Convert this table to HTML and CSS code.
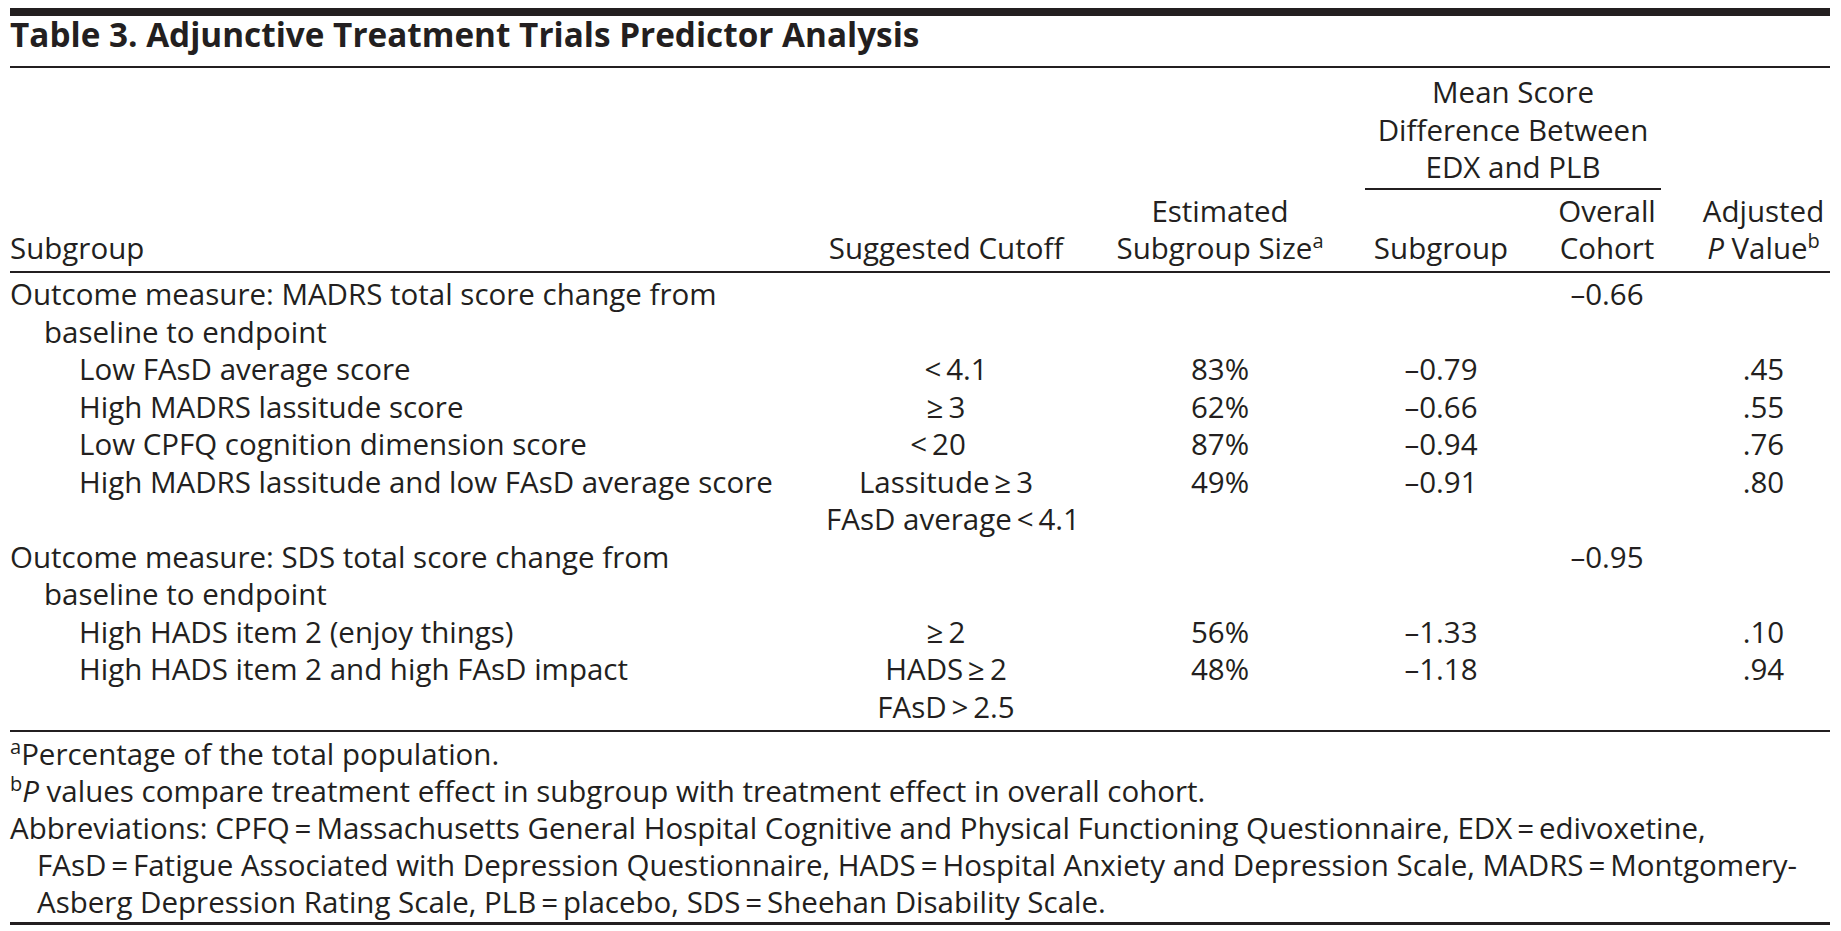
FILE: index.html
```html
<!DOCTYPE html>
<html lang="en">
<head>
<meta charset="utf-8">
<title>Table 3. Adjunctive Treatment Trials Predictor Analysis</title>
<link rel="stylesheet" href="styles.css">
</head>
<body>
<div class="page">
  <div class="topbar"></div>
  <h1 class="title">Table 3. Adjunctive Treatment Trials Predictor Analysis</h1>
  <table class="data">
    <colgroup>
      <col class="c1"><col class="c2"><col class="c3"><col class="c4"><col class="c5"><col class="c6">
    </colgroup>
    <thead>
      <tr class="hrow1">
        <th rowspan="2" class="rs left">Subgroup</th>
        <th rowspan="2" class="rs">Suggested Cutoff</th>
        <th rowspan="2" class="rs est">Estimated<br>Subgroup Size<sup>a</sup></th>
        <th colspan="2" class="spanner"><div class="spanner-in">Mean Score<br>Difference Between<br>EDX and PLB</div></th>
        <th rowspan="2" class="rs">Adjusted<br><i>P</i> Value<sup>b</sup></th>
      </tr>
      <tr class="hrow2">
        <th>Subgroup</th>
        <th>Overall<br>Cohort</th>
      </tr>
    </thead>
    <tbody>
      <tr>
        <td class="sub l0">Outcome measure: MADRS total score change from<br>baseline to endpoint</td>
        <td></td><td class="est"></td><td></td><td>–0.66</td><td></td>
      </tr>
      <tr>
        <td class="sub l1">Low FAsD average score</td>
        <td class="nudge-r">&lt;&#8201;4.1</td><td class="est">83%</td><td>–0.79</td><td></td><td>.45</td>
      </tr>
      <tr>
        <td class="sub l1">High MADRS lassitude score</td>
        <td>≥&#8201;3</td><td class="est">62%</td><td>–0.66</td><td></td><td>.55</td>
      </tr>
      <tr>
        <td class="sub l1">Low CPFQ cognition dimension score</td>
        <td class="nudge-l">&lt;&#8201;20</td><td class="est">87%</td><td>–0.94</td><td></td><td>.76</td>
      </tr>
      <tr>
        <td class="sub l1">High MADRS lassitude and low FAsD average score</td>
        <td>Lassitude&#8201;≥&#8201;3<br>FAsD average&#8201;&lt;&#8201;4.1</td><td class="est">49%</td><td>–0.91</td><td></td><td>.80</td>
      </tr>
      <tr>
        <td class="sub l0">Outcome measure: SDS total score change from<br>baseline to endpoint</td>
        <td></td><td class="est"></td><td></td><td>–0.95</td><td></td>
      </tr>
      <tr>
        <td class="sub l1">High HADS item 2 (enjoy things)</td>
        <td>≥&#8201;2</td><td class="est">56%</td><td>–1.33</td><td></td><td>.10</td>
      </tr>
      <tr>
        <td class="sub l1">High HADS item 2 and high FAsD impact</td>
        <td>HADS&#8201;≥&#8201;2<br>FAsD&#8201;&gt;&#8201;2.5</td><td class="est">48%</td><td>–1.18</td><td></td><td>.94</td>
      </tr>
    </tbody>
  </table>
  <div class="notes">
    <p class="note"><sup>a</sup>Percentage of the total population.</p>
    <p class="note"><sup>b</sup><i>P</i> values compare treatment effect in subgroup with treatment effect in overall cohort.</p>
    <p class="note abbr">Abbreviations: CPFQ&#8201;=&#8201;Massachusetts General Hospital Cognitive and Physical Functioning Questionnaire, EDX&#8201;=&#8201;edivoxetine,<br>FAsD&#8201;=&#8201;Fatigue Associated with Depression Questionnaire, HADS&#8201;=&#8201;Hospital Anxiety and Depression Scale, MADRS&#8201;=&#8201;Montgomery-<br>Asberg Depression Rating Scale, PLB&#8201;=&#8201;placebo, SDS&#8201;=&#8201;Sheehan Disability Scale.</p>
  </div>
</div>
</body>
</html>
```
FILE: styles.css
```css
html, body {
  margin: 0;
  padding: 0;
  background: #ffffff;
}

body {
  color: #231f20;
  font-family: "Open Sans", "Noto Sans", sans-serif;
}

.page {
  width: 1820px;
  margin-left: 10px;
  padding-top: 8px;
}

.topbar {
  height: 8px;
  background: #231f20;
}

.title {
  margin: 0;
  font-size: 33.3px;
  line-height: 36px;
  font-weight: 700;
  padding-bottom: 14px;
  border-bottom: 2px solid #231f20;
}

.data {
  width: 1820px;
  table-layout: fixed;
  border-collapse: separate;
  border-spacing: 0;
  font-size: 29.5px;
  line-height: 37.5px;
}

.c1 { width: 816px; }
.c2 { width: 240px; }
.c3 { width: 299px; }
.c4 { width: 152px; }
.c5 { width: 180px; }
.c6 { width: 133px; }

th {
  font-weight: 400;
  text-align: center;
  vertical-align: bottom;
  padding: 0;
  white-space: nowrap;
}

th.left {
  text-align: left;
}

th.rs {
  padding-bottom: 4.5px;
  border-bottom: 2px solid #231f20;
}

th.rs.est {
  padding-left: 9px;
}

.hrow1 .spanner {
  padding-top: 5px;
}

.spanner-in {
  margin-right: 36px;
  padding-bottom: 2.5px;
  border-bottom: 2px solid #231f20;
}

.hrow2 th {
  padding-top: 1.5px;
  padding-bottom: 4.5px;
  border-bottom: 2px solid #231f20;
}

td {
  padding: 0;
  text-align: center;
  vertical-align: top;
  white-space: nowrap;
}

td.est {
  padding-left: 9px;
}

td.nudge-r {
  padding-left: 20px;
}

td.nudge-l {
  padding-right: 16px;
}

td.sub {
  text-align: left;
}

td.l0 {
  padding-left: 34px;
  text-indent: -34px;
}

td.l1 {
  padding-left: 69px;
}

tbody tr:first-child td {
  padding-top: 2px;
}

tbody tr:last-child td {
  padding-bottom: 5px;
  border-bottom: 2px solid #231f20;
}

sup {
  font-size: 20px;
  line-height: 0;
  vertical-align: 11px;
}

.notes {
  padding-top: 3px;
  padding-bottom: 2px;
  border-bottom: 3px solid #231f20;
  font-size: 29.5px;
  line-height: 37px;
  white-space: nowrap;
}

.note {
  margin: 0;
}

.note.abbr {
  padding-left: 27px;
  text-indent: -27px;
}
```
